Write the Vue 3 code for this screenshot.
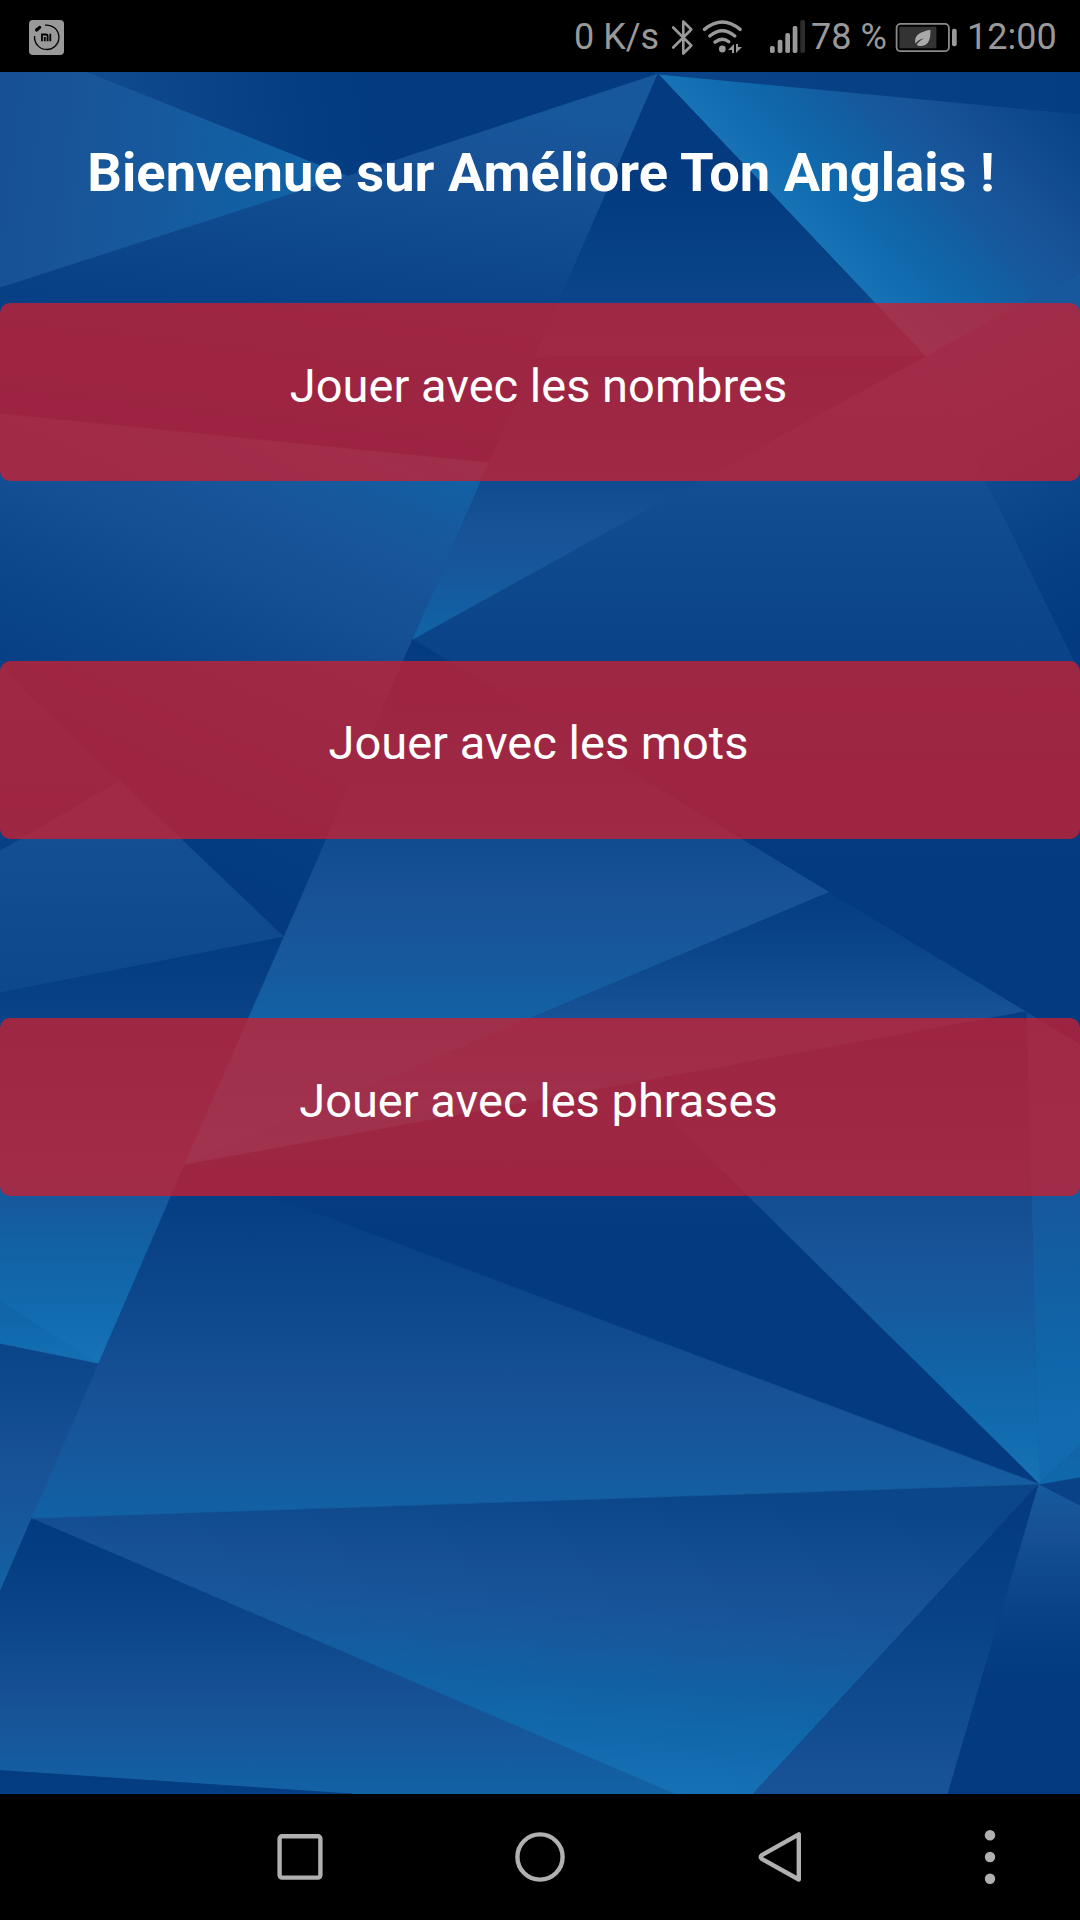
<script setup>
import { ref } from "vue";

const games = ref([
  { id: "nombres", label: "Jouer avec les nombres" },
  { id: "mots", label: "Jouer avec les mots" },
  { id: "phrases", label: "Jouer avec les phrases" },
]);

const signalBars = [
  { x: 2, y: 45 },
  { x: 9.7, y: 38.7 },
  { x: 17.3, y: 32 },
  { x: 24.7, y: 25 },
];

// blue scale shared by every facet of the background
const palette = [
  [0, 3, 58, 128],
  [0.2, 8, 65, 133],
  [0.4, 17, 75, 144],
  [0.5, 24, 81, 150],
  [0.62, 23, 88, 156],
  [0.7, 19, 94, 162],
  [0.85, 15, 105, 172],
  [1, 24, 115, 182],
];

function shade(t) {
  const v = Math.min(1, Math.max(0, t));
  const i = Math.max(1, palette.findIndex((p) => p[0] >= v));
  const a = palette[i - 1];
  const b = palette[i];
  const k = (v - a[0]) / (b[0] - a[0]);
  const c = [1, 2, 3].map((n) => Math.round(a[n] + (b[n] - a[n]) * k));
  return `rgb(${c.join(",")})`;
}

// points, then gradient: x1, y1, shade1, x2, y2, shade2
const shapes = [
  ["0,72 88,72 348,176 0,288", 0, 180, 0.48, 330, 220, 0.8],
  ["88,72 652,72 658,74 348,176", 110, 110, 0.38, 370, 70, 0],
  ["0,288 348,176 658,74 489,463 0,414", 440, 105, 0.6, 400, 440, 0],
  ["0,414 489,463 284,937 0,667", 200, 870, 0, 388, 437, 0.74],
  ["0,667 120,781 0,851", 0, 667, 0.35, 0, 851, 0.13],
  ["0,851 120,781 284,937 0,993", 0, 781, 0.5, 0, 992, 0.32],
  ["0,993 284,937 99,1364 0,1344", 0, 940, 0.05, 0, 1364, 1],
  ["0,1301 99,1364 0,1344", 0, 1300, 0.77, 0, 1360, 0.95],
  ["0,1344 99,1364 32,1518 0,1592", 0, 1344, 0.27, 0, 1592, 0.75],
  ["0,1592 32,1518 676,1794 352,1794 0,1770.5", 0, 1518, 0, 0, 1794, 0.75],
  ["0,1770.5 352,1794 0,1794", 0, 1770, 0.04, 0, 1794, 0.1],
  ["32,1518 1039,1484 753,1794 676,1794", 560, 1490, 0.29, 540, 1794, 1],
  ["1039,1484 753,1794 948,1794", 0, 1500, 0, 0, 1794, 0.54],
  ["1039,1484 948,1794 1080,1794 1080,1505", 0, 1484, 0.65, 0, 1680, 0],
  ["1039,1484 1080,1477 1080,1505", 0, 1484, 0.22, 0, 1505, 0.22],
  ["1026,1011 1080,1044 1080,1446 1039,1484", 0, 1011, 0.34, 30, 1484, 0.88],
  ["1039,1484 1080,1446 1080,1477", 0, 1446, 0.78, 0, 1484, 0.86],
  ["633,1083 1026,1011 1039,1484", 0, 1011, 0.06, 0, 1484, 1],
  ["185,1164 633,1083 1039,1484", 0, 1083, 0.26, 0, 1235, 0],
  ["185,1164 1039,1484 32,1518", 0, 1164, 0.07, 0, 1518, 0.74],
  ["413,639 830,892 185,1164 284,937", 0, 639, 0, 0, 1150, 1],
  ["830,892 1026,1011 185,1164", 0, 892, 0.1, 0, 1150, 0.95],
  ["413,639 925,356 1080,672 1080,1044 1026,1011 830,892", 0, 356, 0.57, 0, 870, 0],
  ["925,356 1080,272 1080,672", 980, 360, 0.62, 1112, 620, 0],
  ["658,74 925,356 1080,272 1080,114", 657, 74, 1, 853, -112, 0.25],
  ["652,72 1080,72 1080,114 658,74", 700, 72, 0.24, 1080, 110, 0.08],
  ["658,74 925,356 535,357", 0, 180, 0, 0, 356, 0.42],
  ["535,357 925,356 413,639 489,463", 0, 356, 0.08, 0, 639, 0.78],
];

const facets = shapes.map(([points, x1, y1, t1, x2, y2, t2], index) => {
  const stops = [];
  for (let n = 0; n <= 8; n++) {
    stops.push({ offset: n / 8, color: shade(t1 + ((t2 - t1) * n) / 8) });
  }
  return { id: "facet" + index, points, x1, y1, x2, y2, stops };
});
</script>

<template>
  <div class="phone">
    <header class="status-bar">
      <svg class="app-icon" viewBox="29 19 35 35" width="35" height="35">
        <rect x="29" y="19" width="35" height="35" rx="4" fill="#999" />
        <path d="M45 24.2A12.2 12.2 0 1 1 34.6 35" fill="none" stroke="#000" stroke-width="1.3" />
        <path d="M36.6 29L39.6 26.4" stroke="#000" stroke-width="3.2" stroke-linecap="round" />
        <path
          d="M42 40.3V33.5H46Q47.6 33.5 47.6 35V40.3M44.8 36V40.3M50.3 32.7V40.3"
          fill="none"
          stroke="#000"
          stroke-width="1.8"
        />
      </svg>
      <span class="speed">0 K/s</span>
      <svg class="bluetooth" viewBox="670 16 26 40" width="26" height="40">
        <path
          d="M673.2 26.5L691.3 44.5L683.3 52.5V20.5L691.3 28.5L673.2 46.5"
          fill="none"
          stroke="#999"
          stroke-width="2.6"
          stroke-linecap="round"
          stroke-linejoin="round"
        />
      </svg>
      <svg class="wifi" viewBox="700 16 46 40" width="46" height="40">
        <g fill="none" stroke="#999" stroke-width="3.4" stroke-linecap="round">
          <path d="M704.5 28.4Q722.3 13.6 740.1 28.4" />
          <path d="M709.8 35Q722.3 24.6 734.8 35" />
          <path d="M715 41.2Q722.3 35.5 728.8 40.8" />
        </g>
        <circle cx="722.3" cy="48" r="3.4" fill="#999" />
        <path d="M728 49L734 43V52H732V49ZM736 43H738V46H742L736 52Z" fill="#999" />
      </svg>
      <svg class="signal" viewBox="0 16 38 40" width="38" height="40">
        <rect
          v-for="bar in signalBars"
          :key="bar.x"
          :x="bar.x"
          :y="bar.y"
          width="4.7"
          :height="52 - bar.y"
          rx="1.8"
          fill="#999"
        />
        <rect x="32.3" y="19" width="4.7" height="33" rx="1.8" fill="#2c2c2c" />
      </svg>
      <span class="percent">78 %</span>
      <svg class="battery" viewBox="894 16 66 40" width="66" height="40">
        <rect x="896.6" y="22.9" width="52.3" height="27.3" rx="4" fill="none" stroke="#8a8a8a" stroke-width="1.8" />
        <rect x="899.4" y="25.8" width="37" height="21.4" rx="1" fill="#333" />
        <path d="M930.4 28.8C930.8 37 929 45.2 921 45C919 45 917.5 44.4 916.6 43.4C918.5 41 921 38.8 924.5 37C920.5 38 917.5 39.8 915.2 42.6C914 34 920 31 930.4 28.8Z" fill="#aaa" />
        <rect x="952" y="27.7" width="4.7" height="17.6" rx="2" fill="#999" />
      </svg>
      <span class="clock">12:00</span>
    </header>

    <main class="content">
      <svg class="backdrop" viewBox="0 72 1080 1722" width="1080" height="1722">
        <defs>
          <linearGradient
            v-for="f in facets"
            :id="f.id"
            :key="f.id"
            gradientUnits="userSpaceOnUse"
            :x1="f.x1"
            :y1="f.y1"
            :x2="f.x2"
            :y2="f.y2"
          >
            <stop v-for="s in f.stops" :key="s.offset" :offset="s.offset" :stop-color="s.color" />
          </linearGradient>
        </defs>
        <polygon
          v-for="f in facets"
          :key="f.id"
          :points="f.points"
          :fill="`url(#${f.id})`"
          :stroke="`url(#${f.id})`"
          stroke-width="0.8"
          stroke-linejoin="round"
        />
      </svg>
      <h1 class="title">Bienvenue sur Améliore Ton Anglais !</h1>
      <div class="games">
        <button v-for="game in games" :key="game.id" class="game-button" type="button">
          {{ game.label }}
        </button>
      </div>
    </main>

    <nav class="nav-bar">
      <svg viewBox="0 0 60 60" width="60" height="60">
        <rect x="9.6" y="9.2" width="40.8" height="41.4" rx="2.5" />
      </svg>
      <svg viewBox="0 0 60 60" width="60" height="60">
        <circle cx="30" cy="30" r="22.6" />
      </svg>
      <svg viewBox="0 0 60 60" width="60" height="60">
        <path d="M48.8 7.3V52.5L11.8 31.8Q9.6 30 11.8 28.2Z" />
      </svg>
      <svg class="dots" viewBox="0 0 60 60" width="60" height="60">
        <circle cx="30" cy="8.3" r="5.2" />
        <circle cx="30" cy="30" r="5.2" />
        <circle cx="30" cy="51.7" r="5.2" />
      </svg>
    </nav>
  </div>
</template>

<style>
body {
  margin: 0;
  background: #000;
}
</style>

<style scoped>
.phone {
  display: flex;
  flex-direction: column;
  width: 1080px;
  height: 1920px;
  overflow: hidden;
  font-family: Roboto, sans-serif;
}
.status-bar {
  display: grid;
  grid-template-columns: 545px 96px 30px 68px 43px 83px 73px 1fr;
  align-items: center;
  box-sizing: border-box;
  height: 72px;
  padding-left: 29px;
  background: #000;
  color: #999;
  font-size: 36px;
  line-height: 72px;
  white-space: nowrap;
}
.status-bar svg {
  display: block;
}
.status-bar span {
  padding-top: 1px;
}
.app-icon {
  margin-top: 1px;
}
.content {
  position: relative;
  display: flex;
  flex-direction: column;
  height: 1722px;
}
.backdrop {
  position: absolute;
  top: 0;
  left: 0;
}
.title {
  position: relative;
  margin: 0;
  padding: 69px 0 0 2px;
  height: 162px;
  color: #fff;
  font-size: 54.3px;
  font-weight: 700;
  line-height: 64px;
  text-align: center;
  white-space: nowrap;
}
.games {
  position: relative;
  display: flex;
  flex-direction: column;
  gap: 179.5px;
}
.game-button {
  height: 178px;
  padding: 0 3px 14px 0;
  border: none;
  border-radius: 10px;
  background: rgba(210, 30, 44, 0.745);
  color: #fff;
  font-family: inherit;
  font-size: 47px;
}
.nav-bar {
  display: grid;
  grid-template-columns: 240px 240px 240px 180px;
  place-items: center;
  height: 126px;
  padding-left: 180px;
  background: #000;
}
.nav-bar svg {
  fill: none;
  stroke: #b0b0b0;
  stroke-width: 4.4;
  stroke-linejoin: round;
}
.nav-bar .dots {
  fill: #b0b0b0;
  stroke: none;
}
</style>
